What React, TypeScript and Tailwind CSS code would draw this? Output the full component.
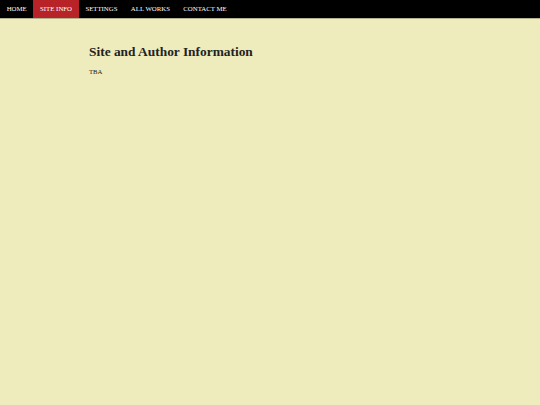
const navItems = ["HOME", "SITE INFO", "SETTINGS", "ALL WORKS", "CONTACT ME"];

export default function App() {
  return (
    <div className="min-h-screen bg-[#eeebbc] font-['Liberation_Serif',serif] text-[#222]">
      <nav className="flex h-[19px] bg-black border-b border-[#b5b38e]">
        {navItems.map((item) => (
          <a
            key={item}
            href="#"
            className={
              "flex items-center px-[6.7px] text-[6.8px] text-white leading-none " +
              (item === "SITE INFO" ? "bg-[#b82328]" : "")
            }
          >
            {item}
          </a>
        ))}
      </nav>
      <main className="pl-[89px] pt-[24px]">
        <h1 className="text-[13.4px] font-bold leading-[18px]">Site and Author Information</h1>
        <p className="mt-[6px] text-[6.7px] leading-[9px]">TBA</p>
      </main>
    </div>
  );
}
